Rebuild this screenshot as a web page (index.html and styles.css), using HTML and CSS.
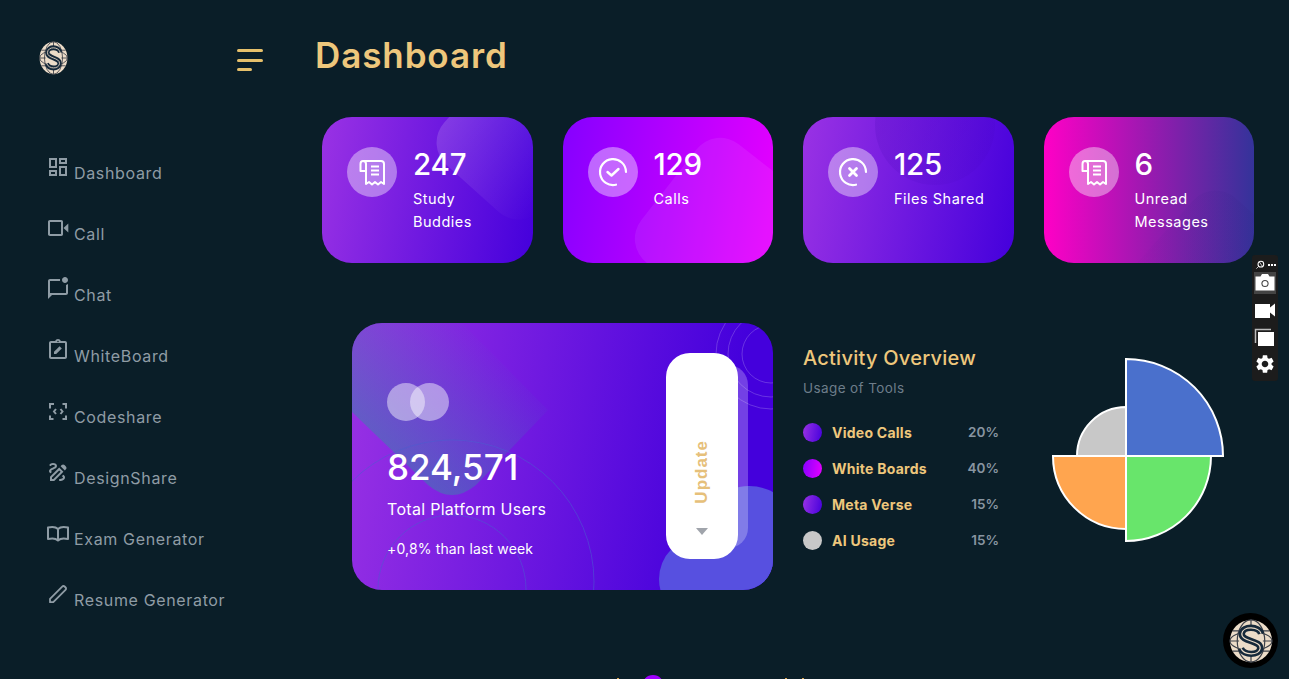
FILE: index.html
```html
<!DOCTYPE html>
<html lang="en">
<head>
<meta charset="utf-8">
<title>Dashboard</title>
<link rel="stylesheet" href="styles.css">
</head>
<body>
<svg class="defs" width="0" height="0" aria-hidden="true">
  <defs>
    <symbol id="logo" viewBox="0 0 48 48" preserveAspectRatio="none">
      <circle cx="24" cy="24" r="23" fill="#ecdcc8"/>
      <g fill="none" stroke="#3c4048" stroke-width="1.300">
        <ellipse cx="24" cy="24" rx="23" ry="10"/>
        <ellipse cx="24" cy="24" rx="15" ry="23"/>
        <path d="M1 24h46M24 0v48M4 13h40M4 35h40"/>
      </g>
      <ellipse cx="24" cy="24" rx="13" ry="17" fill="#ecdcc8"/>
      <path d="M35 16C33 8 15 7 14 16c-1 9 21 7 20 16-1 8-18 8-21 0" fill="none" stroke="#16293a" stroke-width="7"/>
      <path d="M35 16C33 8 15 7 14 16c-1 9 21 7 20 16-1 8-18 8-21 0" fill="none" stroke="#ecdcc8" stroke-width="1.300"/>
    </symbol>
    <symbol id="receipt" viewBox="0 0 50 50">
      <path d="M19 17c0-2-1-3-3-3h18c2 0 3 1 3 3v20l-3-2-3 2.500-3-2.500-3 2.500-3-2.500-3 2V17zM19 24h-5.500v-7c0-2 1-3 2.500-3" fill="none" stroke="#fff" stroke-width="2" stroke-linejoin="round"/>
      <path d="M24 19.500h8M24 23.500h8M24 27.500h8" stroke="#fff" stroke-width="2"/>
    </symbol>
  </defs>
</svg>

<div class="app">
  <aside class="sidebar">
    <div class="brand">
      <svg class="brand-logo"><use href="#logo"/></svg>
      <button class="burger" aria-label="Menu"><i class="bar"></i><i class="bar"></i><i class="bar short"></i></button>
    </div>
    <nav class="nav">
      <a class="nav-item">
        <svg class="nav-icon" viewBox="0 0 24 24"><path d="M19 5v2h-4V5h4M9 5v6H5V5h4m10 8v6h-4v-6h4M9 17v2H5v-2h4M21 3h-8v6h8V3zM11 3H3v10h8V3zm10 8h-8v10h8V11zm-10 4H3v6h8v-6z"/></svg>
        <span class="nav-label">Dashboard</span>
      </a>
      <a class="nav-item">
        <svg class="nav-icon" viewBox="0 0 24 24"><path d="M3.900 4h11.400c.9 0 1.700.8 1.700 1.700v12.600c0 .9-.8 1.700-1.700 1.700H3.900c-1 0-1.900-.8-1.900-1.700V5.700C2 4.800 2.900 4 3.900 4zm.1 2v12h11V6H4z"/><path d="M17.500 12l4.800-4.500v9z"/></svg>
        <span class="nav-label">Call</span>
      </a>
      <a class="nav-item">
        <svg class="nav-icon" viewBox="0 0 24 24"><path d="M22 6.980V16c0 1.100-.9 2-2 2H6l-4 4V4c0-1.100.9-2 2-2h10.100c-.06.32-.1.66-.1 1s.04.68.1 1H4v12h16V7.900c.74-.15 1.420-.5 2-.92zM16 3c0 1.660 1.340 3 3 3s3-1.340 3-3-1.340-3-3-3-3 1.340-3 3z"/></svg>
        <span class="nav-label">Chat</span>
      </a>
      <a class="nav-item">
        <svg class="nav-icon" viewBox="0 0 24 24"><path d="M19 3h-4.180C14.400 1.840 13.300 1 12 1s-2.400.84-2.820 2H5c-1.100 0-2 .9-2 2v14c0 1.100.9 2 2 2h14c1.100 0 2-.9 2-2V5c0-1.100-.9-2-2-2zm-7-.25c.41 0 .75.34.75.75s-.34.75-.75.75-.75-.34-.75-.75.34-.75.75-.75zM19 19H5V5h14v14z"/><path d="M8 16v-2.200l5.600-5.600 2.200 2.200L10.200 16z"/></svg>
        <span class="nav-label">WhiteBoard</span>
      </a>
      <a class="nav-item">
        <svg class="nav-icon" viewBox="0 0 24 24"><path d="M4 9.500V5h4M16.500 5H20v4.500M20 16.500V20h-3.500M7.500 20H4v-3.500M10 10l-2 2.500 2 2.500M14.500 10l2 2.500-2 2.500" fill="none" stroke="#8f9ca5" stroke-width="2"/></svg>
        <span class="nav-label">Codeshare</span>
      </a>
      <a class="nav-item">
        <svg class="nav-icon" viewBox="0 0 24 24"><path d="M18.850 10.390l1.060-1.060c.78-.78.78-2.050 0-2.830L18.500 5.090c-.78-.78-2.050-.78-2.830 0l-1.060 1.060 4.240 4.240zM14.610 11.810L7.410 19H6v-1.410l7.190-7.190 1.420 1.410zM13.190 7.560L4 16.760V21h4.240l9.190-9.190-4.240-4.250zM19 17.500c0 2.190-2.540 3.500-5 3.500-.55 0-1-.45-1-1s.45-1 1-1c1.540 0 3-.73 3-1.500 0-.47-.48-.87-1.230-1.200l1.480-1.480c1.070.63 1.750 1.470 1.750 2.680zM4.580 13.350C3.610 12.790 3 12.060 3 11c0-1.800 1.890-2.630 3.560-3.360C7.590 7.180 9 6.560 9 6c0-.41-.78-1-2-1-1.260 0-1.800.61-1.830.64-.35.41-.98.46-1.400.12-.41-.34-.49-.95-.15-1.380C3.730 4.240 4.760 3 7 3c2.240 0 4 1.320 4 3 0 1.870-1.930 2.720-3.640 3.470C6.420 9.880 5 10.500 5 11c0 .31.43.6 1.070.86l-1.490 1.490z"/></svg>
        <span class="nav-label">DesignShare</span>
      </a>
      <a class="nav-item">
        <svg class="nav-icon" viewBox="0 0 24 24"><path d="M12 8C10 6 6 5.500 2 6.500V18c4-1 8-.5 10 1.500 2-2 6-2.500 10-1.500V6.500C18 5.500 14 6 12 8zM12 8v11" fill="none" stroke="#8f9ca5" stroke-width="2" stroke-linejoin="round"/></svg>
        <span class="nav-label">Exam Generator</span>
      </a>
      <a class="nav-item">
        <svg class="nav-icon" viewBox="0 0 24 24"><path d="M4 20.200v-3.400L16.200 4.600c.8-.8 1.700-.8 2.400-.1l1 1c.7.7.6 1.600-.1 2.300L7.300 20.200z" fill="none" stroke="#8f9ca5" stroke-width="1.800" stroke-linejoin="round"/></svg>
        <span class="nav-label">Resume Generator</span>
      </a>
    </nav>
  </aside>

  <main class="main">
    <h1 class="title">Dashboard</h1>

    <section class="stats">
      <article class="stat stat-violet">
        <i class="blob blob-a"></i>
        <div class="stat-icon"><svg class="stat-glyph"><use href="#receipt"/></svg></div>
        <div class="stat-text"><div class="stat-num">247</div><div class="stat-label">Study Buddies</div></div>
      </article>
      <article class="stat stat-magenta">
        <i class="blob blob-b"></i>
        <div class="stat-icon"><svg class="stat-glyph" viewBox="0 0 50 50"><path d="M28 37.700A13 13 0 1 1 38 25" fill="none" stroke="#fff" stroke-width="2.200" stroke-linecap="round"/><path d="M19.500 25l4 3.500 7-6.500" fill="none" stroke="#fff" stroke-width="2.400" stroke-linecap="round" stroke-linejoin="round"/></svg></div>
        <div class="stat-text"><div class="stat-num">129</div><div class="stat-label">Calls</div></div>
      </article>
      <article class="stat stat-violet">
        <i class="blob blob-c"></i>
        <div class="stat-icon"><svg class="stat-glyph" viewBox="0 0 50 50"><path d="M28 37.700A13 13 0 1 1 38 25" fill="none" stroke="#fff" stroke-width="2.200" stroke-linecap="round"/><path d="M21.500 21.500l7 7M28.500 21.500l-7 7" fill="none" stroke="#fff" stroke-width="2.800" stroke-linecap="round"/></svg></div>
        <div class="stat-text"><div class="stat-num">125</div><div class="stat-label">Files Shared</div></div>
      </article>
      <article class="stat stat-pink">
        <i class="blob blob-d"></i>
        <div class="stat-icon"><svg class="stat-glyph"><use href="#receipt"/></svg></div>
        <div class="stat-text"><div class="stat-num">6</div><div class="stat-label">Unread Messages</div></div>
      </article>
    </section>

    <section class="lower">
      <article class="hero">
        <svg class="hero-art" viewBox="0 0 421 267" aria-hidden="true">
          <defs>
            <linearGradient id="shade" gradientUnits="userSpaceOnUse" x1="70" y1="170" x2="175" y2="55">
              <stop offset="0" stop-color="#3f7cb0" stop-opacity=".62"/>
              <stop offset="1" stop-color="#3f7cb0" stop-opacity=".02"/>
            </linearGradient>
          </defs>
          <path d="M0 89L76 162q24 20 48 0L196 87 110 0H0z" fill="url(#shade)"/>
          <g fill="none" stroke="#4d5ccf" stroke-opacity=".55" stroke-width="1">
            <circle cx="100" cy="259" r="142"/>
            <circle cx="100" cy="266" r="74"/>
          </g>
          <g fill="none" stroke="#fff" stroke-opacity=".2" stroke-width="1">
            <circle cx="419" cy="31" r="29"/>
            <circle cx="419" cy="31" r="43"/>
            <circle cx="419" cy="31" r="55"/>
          </g>
          <circle cx="349" cy="256" r="42" fill="#5750e0"/>
          <circle cx="397" cy="213" r="50" fill="#5750e0"/>
          <rect x="349" y="220" width="72" height="47" fill="#5750e0"/>
        </svg>
        <div class="hero-main">
          <div class="rings"><i class="ring"></i><i class="ring ring-2"></i></div>
          <div class="hero-num">824,571</div>
          <div class="hero-label">Total Platform Users</div>
          <div class="hero-note">+0,8% than last week</div>
        </div>
        <div class="update-wrap">
          <i class="update-back"></i>
          <button class="update"><span class="update-text">Update</span><i class="caret"></i></button>
        </div>
      </article>

      <div class="activity">
        <h2 class="activity-title">Activity Overview</h2>
        <p class="activity-sub">Usage of Tools</p>
        <ul class="legend">
          <li class="legend-row"><i class="dot dot-violet"></i><span class="legend-name">Video Calls</span><span class="legend-val">20%</span></li>
          <li class="legend-row"><i class="dot dot-magenta"></i><span class="legend-name">White Boards</span><span class="legend-val">40%</span></li>
          <li class="legend-row"><i class="dot dot-violet"></i><span class="legend-name">Meta Verse</span><span class="legend-val">15%</span></li>
          <li class="legend-row"><i class="dot dot-grey"></i><span class="legend-name">AI Usage</span><span class="legend-val">15%</span></li>
        </ul>
      </div>

      <svg class="pie" viewBox="0 0 174 186" aria-label="Usage pie chart">
        <g stroke="#fff" stroke-width="2" stroke-linejoin="miter">
          <path d="M74 99V50A49 49 0 0 0 25 99z" fill="#c8c8c8"/>
          <path d="M74 99H1A73 73 0 0 0 74 172z" fill="#ffa54f"/>
          <path d="M74 99V184A85 85 0 0 0 159 99z" fill="#68e56b"/>
          <path d="M74 99V2A97 97 0 0 1 171 99z" fill="#4a70cc"/>
        </g>
      </svg>
    </section>

    <section class="next">
      <i class="next-mark"></i><i class="next-dot"></i><i class="next-mark next-gap"></i><i class="next-mark next-gap-2"></i>
    </section>
  </main>
</div>

<aside class="capture">
  <div class="capture-top"><svg class="capture-link" viewBox="0 0 12 12"><circle cx="6.500" cy="5.500" r="3.800" fill="none" stroke="#fff" stroke-width="1.400"/><path d="M.5 11.500l3-3M4 2l5 7" stroke="#fff" stroke-width="1"/></svg><i class="capture-dots"></i></div>
  <button class="capture-btn is-active"><svg class="capture-icon" viewBox="0 0 22 22"><path d="M1.500 4.500h5l1.500-2.500h6l1.500 2.500h5v14h-19z" fill="#fff"/><circle cx="11" cy="11.500" r="3.600" fill="#444"/><circle cx="11" cy="11.500" r="2.500" fill="#fff"/></svg></button>
  <button class="capture-btn"><svg class="capture-icon" viewBox="0 0 22 22"><path d="M1 4h15v3.500L21 3.500v13l-5-4V18H1z" fill="#fff"/></svg></button>
  <button class="capture-btn"><svg class="capture-icon" viewBox="0 0 22 22"><path d="M1.500 17V3.500H17" fill="none" stroke="#bbb" stroke-width="1.500"/><rect x="4" y="6" width="16" height="14" fill="#fff"/></svg></button>
  <button class="capture-btn"><svg class="capture-icon gear" viewBox="0 0 24 24"><path d="M19.140 12.940c.04-.3.06-.61.06-.94 0-.32-.02-.64-.07-.94l2.030-1.580a.49.49 0 0 0 .12-.61l-1.920-3.320a.488.488 0 0 0-.59-.22l-2.390.96c-.5-.38-1.030-.7-1.620-.94l-.36-2.540a.484.484 0 0 0-.48-.41h-3.840c-.24 0-.43.17-.47.41l-.36 2.540c-.59.24-1.130.57-1.620.94l-2.390-.96c-.22-.08-.47 0-.59.22L2.740 8.870c-.12.21-.08.47.12.61l2.030 1.580c-.05.3-.09.63-.09.94s.02.64.07.94l-2.030 1.580a.49.49 0 0 0-.12.61l1.920 3.320c.12.22.37.29.59.22l2.390-.96c.5.38 1.030.7 1.620.94l.36 2.540c.05.24.24.41.48.41h3.840c.24 0 .44-.17.47-.41l.36-2.540c.59-.24 1.130-.56 1.620-.94l2.390.96c.22.08.47 0 .59-.22l1.920-3.320c.12-.22.07-.47-.12-.61l-2.010-1.580zM12 15.600c-1.980 0-3.600-1.620-3.600-3.600s1.620-3.600 3.600-3.600 3.600 1.620 3.600 3.600-1.620 3.600-3.600 3.600z" fill="#fff"/></svg></button>
</aside>

<div class="fab"><svg class="fab-logo"><use href="#logo"/></svg></div>
</body>
</html>
```

FILE: styles.css
```css
* { box-sizing: border-box; }
html, body { margin: 0; height: 100%; overflow: hidden; }
body { background: #0a1e28; font-family: Inter, "Liberation Sans", sans-serif; color: #fff; }
i { display: block; font-style: normal; }
.defs { position: absolute; }

.app { display: flex; height: 679px; overflow: hidden; }

/* sidebar */
.sidebar { flex: 0 0 315px; }
.brand { display: flex; align-items: flex-start; justify-content: space-between; padding: 41px 52px 0 39px; height: 155px; }
.brand-logo { width: 29px; height: 34px; }
.burger { display: flex; flex-direction: column; gap: 6.500px; width: 26px; margin-top: 8px; padding: 0; background: none; border: 0; }
.bar { width: 26px; height: 3px; background: #e6c06b; border-radius: 2px; }
.bar.short { width: 15px; }
.nav { display: flex; flex-direction: column; padding-left: 46px; }
.nav-item { display: flex; gap: 4px; height: 61px; color: #8f9ca5; }
.nav-icon { width: 24px; height: 24px; flex: none; fill: #8f9ca5; }
.nav-label { margin-top: 6px; font-size: 16px; line-height: 24px; letter-spacing: .65px; }

/* main */
.main { flex: 1; min-width: 0; padding-right: 35px; }
.title { margin: 33px 0 0; font-size: 35px; line-height: 44px; font-weight: 600; color: #eec77c; letter-spacing: .9px; }

.stats { display: grid; grid-template-columns: repeat(4, 1fr); gap: 30px; margin: 40px 0 0 7px; }
.stat { position: relative; display: flex; align-items: flex-start; gap: 16px; height: 146px; padding: 29px 10px 0 25px; border-radius: 30px; overflow: hidden; }
.stat-violet { background: linear-gradient(100deg, #9a32e4 0%, #4400dc 100%); }
.stat-magenta { background: linear-gradient(100deg, #8500ff 0%, #e800ff 100%); }
.stat-pink { background: linear-gradient(90deg, #ff00c6 0%, #34339a 100%); }
.blob { position: absolute; border-radius: 30px; }
.blob-a { width: 130px; height: 130px; top: -42px; left: 129px; transform: rotate(42deg); background: linear-gradient(90deg, rgba(255,255,255,.15), rgba(255,255,255,0)); }
.blob-b { width: 150px; height: 150px; top: 39px; left: 90px; transform: rotate(38deg); background: rgba(255,255,255,.07); }
.blob-c { width: 120px; height: 120px; top: -52px; left: 72px; border-radius: 60px; background: linear-gradient(135deg, rgba(60,0,170,.18), rgba(60,0,170,.06)); }
.blob-d { width: 150px; height: 150px; top: 92px; left: 100px; transform: rotate(42deg); background: linear-gradient(45deg, rgba(50,30,130,0), rgba(50,30,130,.16)); }
.stat-icon { position: relative; flex: none; width: 50px; height: 50px; margin-top: 1px; border-radius: 50%; background: rgba(255,255,255,.4); }
.stat-glyph { display: block; width: 50px; height: 50px; }
.stat-text { position: relative; min-width: 0; }
.stat-num { font-size: 29.500px; line-height: 36px; font-weight: 500; letter-spacing: -.2px; }
.stat-label { margin-top: 5px; font-size: 14.500px; line-height: 23px; letter-spacing: .5px; max-width: 100px; }

.lower { display: flex; align-items: flex-start; margin: 60px 0 0 37px; }
.hero { position: relative; flex: 0 0 421px; display: flex; justify-content: space-between; height: 267px; padding: 30px 35px 0 35px; border-radius: 30px; overflow: hidden; background: linear-gradient(100deg, #9a32e4 0%, #4400dc 85%); }
.hero-art { position: absolute; left: 0; top: 0; width: 421px; height: 267px; }
.hero-main { position: relative; padding-top: 30px; }
.rings { display: flex; }
.ring { width: 38px; height: 38px; border-radius: 50%; background: rgba(255,255,255,.45); }
.ring-2 { width: 39px; margin-left: -15px; }
.hero-num { margin-top: 23px; font-size: 35px; line-height: 46px; font-weight: 500; }
.hero-label { margin-top: 7px; font-size: 16px; line-height: 24px; letter-spacing: .3px; }
.hero-note { margin-top: 17px; font-size: 14px; line-height: 22px; letter-spacing: .15px; }
.update-wrap { position: relative; width: 72px; height: 206px; }
.update-back { position: absolute; left: 10px; top: 12px; width: 72px; height: 183px; border-radius: 20px; background: rgba(255,255,255,.25); }
.update { position: relative; display: flex; flex-direction: column; align-items: center; justify-content: flex-end; width: 72px; height: 206px; padding: 0 0 24px; border: 0; border-radius: 24px; background: #fff; }
.update-text { writing-mode: vertical-rl; transform: rotate(180deg); font-family: inherit; font-size: 17px; font-weight: 600; color: #e6c07a; letter-spacing: 1px; }
.caret { margin-top: 24px; width: 0; height: 0; border: 6px solid transparent; border-top: 7px solid #a0a4ab; border-bottom: 0; }

.activity { flex: 0 0 196px; margin: 21px 0 0 30px; }
.activity-title { margin: 0; font-size: 20px; line-height: 28px; font-weight: 500; color: #eec77c; letter-spacing: .25px; }
.activity-sub { margin: 6px 0 0; font-size: 13.500px; line-height: 20px; color: #6d7d8a; letter-spacing: .4px; }
.legend { list-style: none; margin: 16px 0 0; padding: 0; }
.legend-row { display: flex; align-items: center; height: 36px; }
.dot { width: 19px; height: 19px; border-radius: 50%; margin-right: 10px; }
.dot-violet { background: linear-gradient(100deg, #9a32e4, #4400dc); }
.dot-magenta { background: linear-gradient(100deg, #8500ff, #e800ff); }
.dot-grey { background: #c8c8c8; }
.legend-name { flex: 1; font-size: 14px; font-weight: 700; color: #eec77c; letter-spacing: .25px; }
.legend-val { font-size: 13.500px; font-weight: 600; color: #8895a1; }

.pie { flex: none; width: 174px; height: 186px; margin: 34px 0 0 53px; }

.next { display: flex; align-items: flex-start; margin: 85px 0 0 302px; }
.next-dot { width: 22px; height: 22px; border-radius: 50%; background: #a000ff; margin-left: 23px; }
.next-mark { width: 2px; height: 1px; margin-top: 3px; background: #d8a04a; }
.next-gap { margin-left: 121px; }
.next-gap-2 { margin-left: 15px; }

/* overlays */
.capture { position: fixed; left: 1252px; top: 255px; width: 26px; height: 126px; padding: 2px; border-radius: 3px; background: #1c1c1c; }
.capture-top { display: flex; align-items: center; gap: 3px; height: 15px; padding-left: 2px; }
.capture-link { width: 9px; height: 9px; }
.capture-dots { width: 8px; height: 2px; background: repeating-linear-gradient(90deg, #fff 0 2px, transparent 2px 3px); }
.capture-btn { display: block; width: 22px; height: 26px; padding: 2px 0 0; border: 0; background: none; }
.capture-btn.is-active { height: 22px; padding: 0; background: #444; margin-bottom: 3px; }
.capture-icon { display: block; width: 22px; height: 22px; }
.capture-icon.gear { margin-top: 1px; }
.fab { position: fixed; left: 1223px; top: 613px; display: flex; align-items: center; justify-content: center; width: 55px; height: 55px; border-radius: 50%; background: #000; }
.fab-logo { width: 44px; height: 44px; }
```
